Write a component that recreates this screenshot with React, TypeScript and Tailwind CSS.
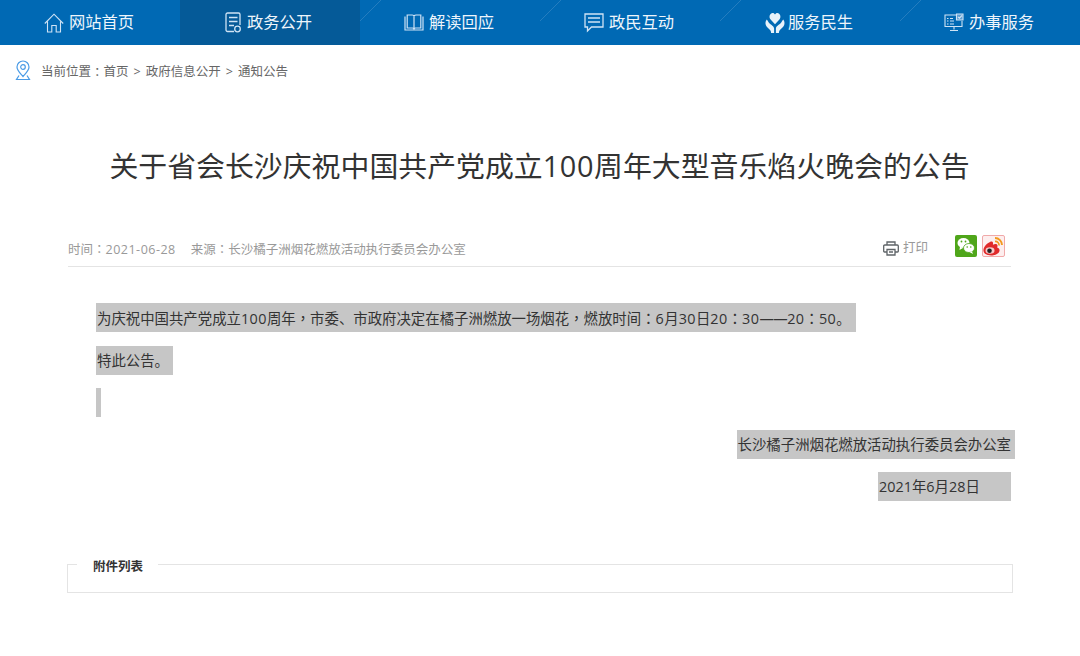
import React from "react";

const font = { fontFamily: '"Open Sans","Noto Sans CJK SC",sans-serif' };

const I = ({ children, w = 20, h = 20, vb = "0 0 20 20" }: { children: React.ReactNode; w?: number; h?: number; vb?: string }) => (
  <svg width={w} height={h} viewBox={vb} fill="none" stroke="#cfe3f5" strokeWidth="1.1" className="shrink-0">
    {children}
  </svg>
);

const Home = () => (
  <I>
    <path d="M0.8 10.5 10 1.2l9.2 9.3M3.5 8.5V19h4.3v-6.5h4.4V19h4.3V8.5" />
  </I>
);
const Doc = () => (
  <I w={17} h={21} vb="0 0 17 21">
    <path d="M9 19.5H2.5a1.5 1.5 0 0 1-1.5-1.5V2.5A1.5 1.5 0 0 1 2.5 1h11A1.5 1.5 0 0 1 15 2.5V13" strokeWidth="1.3" />
    <path d="M4 5.5h8.5M4 9.500h8.500M4 13.500h5" strokeWidth="1.3" />
    <circle cx="12.500" cy="17" r="2.800" strokeWidth="1.3" />
  </I>
);
const Book = () => (
  <I w={20} h={18} vb="0 0 20 18">
    <path d="M1 2.500v13.500h18V2.500M3.200 14V1h5a1.800 1.800 0 0 1 1.800 1.800A1.800 1.800 0 0 1 11.800 1h5v13h-5a1.800 1.800 0 0 0-1.800 1 1.800 1.800 0 0 0-1.800-1zM10 3v11" strokeWidth="1.2" />
  </I>
);
const Chat = () => (
  <I w={20} h={20} vb="0 0 20 20">
    <path d="M1 1h18v13H7.500L3.500 18v-4H1z" strokeWidth="1.3" />
    <path d="M4 5h12M4 9h12" strokeWidth="1.3" />
  </I>
);
const Heart = () => (
  <svg width="20" height="22" viewBox="0 0 20 22" className="shrink-0" fill="#e8f2fa">
    <path d="M10 12.200 5.600 7.600C3.400 5 5 1 7.600 1 8.800 1 9.500 1.700 10 2.600 10.500 1.700 11.200 1 12.400 1c2.600 0 4.200 4 2 6.600z" />
    <path d="M1.800 7.500C.5 9 .2 11 .8 13c.7 2.300 3 3.500 4.500 5.300.5.700.8 1.500.8 2.700h3V16.500C9.100 14 6 13 4.600 11.500 3.200 10 3 9 1.800 7.500z" />
    <path d="M18.200 7.500C19.500 9 19.800 11 19.200 13c-.7 2.300-3 3.500-4.500 5.300-.5.700-.8 1.500-.8 2.700h-3V16.500C10.900 14 14 13 15.400 11.500 16.800 10 17 9 18.200 7.500z" />
  </svg>
);
const Desk = () => (
  <I w={20} h={20} vb="0 0 20 20">
    <path d="M12 2H1v11.500h17V8" />
    <path d="M3 5.500h1.500M6 5.500h3M3 8h1.500M6 8h4M3 11h1.500M6 11h4M10 13.500v3M6 17.500h8" />
    <path d="M12.500 1H19v6h-6.500z" fill="#5f9fd2" />
    <path d="m14 3.800 1.400 1.400L18 2.500" />
  </I>
);

const nav: { label: string; icon: React.ReactNode; active?: boolean; pl: string; gap: string }[] = [
  { label: "网站首页", icon: <Home />, pl: "pl-[44px]", gap: "gap-[5px]" },
  { label: "政务公开", icon: <Doc />, active: true, pl: "pl-[45px]", gap: "gap-[5px]" },
  { label: "解读回应", icon: <Book />, pl: "pl-[44px]", gap: "gap-[5px]" },
  { label: "政民互动", icon: <Chat />, pl: "pl-[44px]", gap: "gap-[5px]" },
  { label: "服务民生", icon: <Heart />, pl: "pl-[45px]", gap: "gap-[3px]" },
  { label: "办事服务", icon: <Desk />, pl: "pl-[44px]", gap: "gap-[5px]" },
];

const Slash = () => (
  <svg width="22" height="21" viewBox="0 0 22 21" className="absolute left-0 top-0" fill="none" stroke="#2f83c2" strokeWidth="0.8">
    <path d="M0 21 21 0" />
  </svg>
);

const Pin = () => (
  <svg width="16" height="21" viewBox="0 0 16 21" fill="none" stroke="#4a9be6" strokeWidth="1.2" className="shrink-0">
    <path d="M8 16.500C5 13 2 10.500 2 7a6 6 0 0 1 12 0c0 3.500-3 6-6 9.500z" />
    <circle cx="8" cy="7" r="2.300" />
    <path d="M4 15.500 1.500 19.500h13L12 15.500" />
  </svg>
);

const Printer = () => (
  <svg width="16" height="15" viewBox="0 0 16 15" fill="none" stroke="#5f6468" strokeWidth="1.300" className="shrink-0">
    <path d="M4 4V1h8v3M4 11H1.500a.8.8 0 0 1-.8-.8V5a1 1 0 0 1 1-1h12.600a1 1 0 0 1 1 1v5.200a.8.8 0 0 1-.8.8H12" />
    <path d="M4 8.500h8V14H4zM6 11h4" />
  </svg>
);

const Wechat = () => (
  <svg width="22" height="22" viewBox="0 0 22 22" className="shrink-0">
    <rect width="22" height="22" rx="2" fill="#4fa61a" />
    <ellipse cx="8.500" cy="8" rx="6" ry="5" fill="#fff" />
    <path d="M5 11.500 4.500 15l3.500-2z" fill="#fff" />
    <ellipse cx="14" cy="13" rx="5.500" ry="4.500" fill="#fff" stroke="#4fa61a" strokeWidth="0.8" />
    <path d="M17 16.500 18 19l-3.500-2z" fill="#fff" />
    <circle cx="6.500" cy="6.500" r="0.900" fill="#4fa61a" />
    <circle cx="10.500" cy="6.500" r="0.900" fill="#4fa61a" />
    <circle cx="12.200" cy="12" r="0.800" fill="#4fa61a" />
    <circle cx="15.800" cy="12" r="0.800" fill="#4fa61a" />
  </svg>
);

const Weibo = () => (
  <svg width="23" height="22" viewBox="0 0 23 22" className="shrink-0">
    <rect x="0.500" y="0.500" width="22" height="21" rx="1.500" fill="#fdeeee" stroke="#f0a9a9" />
    <path d="M8 7C4.500 8.500 1 12.500 1.500 16c.5 3.500 5.500 5 10 4.200 3.800-.7 6.500-3 6-5.500-.3-1.300-1.500-2-2.400-2.200.7-1.300.6-2.800-.4-3.300-1.200-.5-2.700 0-3.800.6.300-1.400.2-2.500-.5-3-.6-.4-1.500-.3-2.400.2z" fill="#e02a2a" />
    <ellipse cx="8" cy="15.500" rx="4.500" ry="3.300" fill="#f7c9c9" />
    <circle cx="7.500" cy="15.700" r="2.300" fill="#222" />
    <path d="M13 6.500a3.500 3.500 0 0 1 4 4" stroke="#f39a1d" strokeWidth="1.700" fill="none" />
    <path d="M13 3a7 7 0 0 1 7 7" stroke="#f39a1d" strokeWidth="1.900" fill="none" />
  </svg>
);

// Centred full-width punctuation, as the reference's colons and commas are.
const P = ({ c }: { c: string }) => <span className="font-['Noto_Sans_CJK_TC']">{c}</span>;
const D = ({ c }: { c: string }) => <span className="tracking-[0.04em]">{c}</span>;
const N = ({ c }: { c: string }) => <span className="tracking-[0.03em]">{c}</span>;

const hl = "inline-block h-[29px] bg-[#c6c6c6] leading-[29px] text-[14.4px] text-[#333]";
const row = "flex h-[29px]";

export default function App() {
  return (
    <div className="min-h-[656px] w-[1080px] overflow-hidden bg-white" style={font}>
      <nav className="flex h-[45px] bg-[#0069b4]">
        {nav.map((n, i) => (
          <div
            key={n.label}
            className={`relative flex w-[180px] items-center ${n.pl} ${n.gap} ${n.active ? "bg-[#055a98]" : ""}`}
          >
            {i > 1 && <Slash />}
            {n.icon}
            <span className="text-[16.300px] leading-none text-[#eef5fb]">{n.label}</span>
          </div>
        ))}
      </nav>

      <div className="flex h-[50px] items-center gap-[10px] pl-[15px] text-[12.500px] text-[#666]">
        <Pin />
        <span className="mt-[4px] flex items-center">
          当前位置<P c="：" />首页
          <span className="mx-[5px]">&gt;</span>
          政府信息公开
          <span className="mx-[5px]">&gt;</span>
          通知公告
        </span>
      </div>

      <main className="px-[68px]">
        <h1 className="-ml-[1px] mt-[52px] h-[38px] text-center text-[28.900px] font-normal leading-[38px] text-[#333]">
          关于省会长沙庆祝中国共产党成立<span className="tracking-[0.02em]">100</span>周年大型音乐焰火晚会的公告
        </h1>

        <div className="mt-[46px] flex h-[36px] w-[943px] items-start border-b border-[#e4e4e4] pt-[4px] text-[12.500px] text-[#999]">
          <span className="mt-[5px]">时间<P c="：" /><D c="2021-06-28" /></span>
          <span className="ml-[15px] mt-[5px]">来源<P c="：" />长沙橘子洲烟花燃放活动执行委员会办公室</span>
          <div className="ml-auto mr-[6px] flex items-start">
            <div className="mt-[4px] flex items-center gap-[4px]">
              <Printer />
              <span>打印</span>
            </div>
            <div className="ml-[27px] flex gap-[5px]">
              <Wechat />
              <Weibo />
            </div>
          </div>
        </div>

        <div className="mt-[36.400px] flex flex-col gap-[13.250px] pl-[28px]">
          <div className={row}>
            <span className={`${hl} pl-[1px] pr-[5px]`}>
              为庆祝中国共产党成立<N c="100" />周年<P c="，" />市委、市政府决定在橘子洲燃放一场烟花<P c="，" />燃放时间<P c="：" /><N c="6" />月<N c="30" />日<N c="20" /><P c="：" /><N c="30" /><span className="tracking-[-0.5px]">——</span><N c="20" /><P c="：" /><N c="50" />。
            </span>
          </div>
          <div className={row}>
            <span className={`${hl} w-[77px] pl-[1px]`}>特此公告。</span>
          </div>
          <div className={row}>
            <span className={`${hl} w-[5px]`}></span>
          </div>
          <div className={`${row} justify-end`}>
            <span className={`${hl} -mr-[3px] pr-[4px] pl-[1px]`}>长沙橘子洲烟花燃放活动执行委员会办公室</span>
          </div>
          <div className={`${row} justify-end`}>
            <span className={`${hl} mr-[1px] w-[133px] pl-[1px]`}>2021年6月28日</span>
          </div>
        </div>

        <fieldset className="-ml-[1px] mt-[54.600px] h-[37px] w-[946px] border border-[#e4e4e4]">
          <legend className="ml-[9px] pl-[16px] pr-[15px] pt-[4px] text-[12.500px] font-bold leading-[14px] text-[#333]">附件列表</legend>
        </fieldset>
      </main>
    </div>
  );
}
